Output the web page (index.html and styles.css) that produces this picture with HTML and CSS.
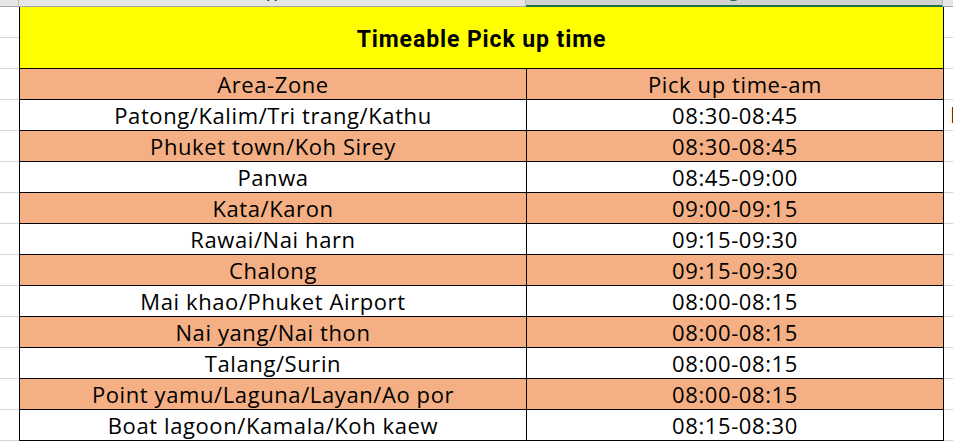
FILE: index.html
```html
<!DOCTYPE html>
<html>
<head>
<meta charset="utf-8">
<link rel="stylesheet" href="styles.css">
</head>
<body>
<div class="colhead">
  <div class="ch corner"></div>
  <div class="ch col-a"><span class="letter">A</span></div>
  <div class="ch col-b"><span class="letter">B</span></div>
  <div class="ch col-c"></div>
</div>
<div class="sheet">
  <div class="gutter"></div>
  <div class="table">
    <div class="title">Timeable Pick up time</div>
    <div class="row salmon"><div class="cell zone">Area-Zone</div><div class="cell time">Pick up time-am</div></div>
    <div class="row"><div class="cell zone">Patong/Kalim/Tri trang/Kathu</div><div class="cell time">08:30-08:45</div></div>
    <div class="row salmon"><div class="cell zone">Phuket town/Koh Sirey</div><div class="cell time">08:30-08:45</div></div>
    <div class="row"><div class="cell zone">Panwa</div><div class="cell time">08:45-09:00</div></div>
    <div class="row salmon"><div class="cell zone">Kata/Karon</div><div class="cell time">09:00-09:15</div></div>
    <div class="row"><div class="cell zone">Rawai/Nai harn</div><div class="cell time">09:15-09:30</div></div>
    <div class="row salmon"><div class="cell zone">Chalong</div><div class="cell time">09:15-09:30</div></div>
    <div class="row"><div class="cell zone">Mai khao/Phuket Airport</div><div class="cell time">08:00-08:15</div></div>
    <div class="row salmon"><div class="cell zone">Nai yang/Nai thon</div><div class="cell time">08:00-08:15</div></div>
    <div class="row"><div class="cell zone">Talang/Surin</div><div class="cell time">08:00-08:15</div></div>
    <div class="row salmon"><div class="cell zone">Point yamu/Laguna/Layan/Ao por</div><div class="cell time">08:00-08:15</div></div>
    <div class="row"><div class="cell zone">Boat lagoon/Kamala/Koh kaew</div><div class="cell time">08:15-08:30</div></div>
  </div>
  <div class="gutter right"><div class="spill">K</div></div>
</div>
</body>
</html>
```
FILE: styles.css
```css
html, body {
  margin: 0;
  padding: 0;
  background: #ffffff;
  overflow: hidden;
}
body {
  width: 953px;
  height: 444px;
  font-family: "Open Sans", "Noto Sans CJK SC", sans-serif;
  color: #000;
}
.colhead {
  display: flex;
  height: 7px;
}
.ch {
  box-sizing: border-box;
  height: 7px;
  background: #e6e6e6;
  border-bottom: 1px solid #a6a6a6;
  overflow: hidden;
  text-align: center;
}
.corner { width: 19px; border-right: 1px solid #bcbcbc; }
.col-a { width: 507px; border-right: 1px solid #bcbcbc; }
.col-b {
  width: 417px;
  background: #d2d2d2;
  border-bottom: 2px solid #217346;
  border-right: 1px solid #bcbcbc;
}
.col-c { flex: 1; }
.letter {
  display: block;
  font-family: "Liberation Sans", sans-serif;
  font-size: 14px;
  line-height: 14px;
  margin-top: -11px;
}
.col-a .letter { color: #000; }
.col-b .letter { color: #217346; }
.sheet {
  display: flex;
  height: 437px;
}
.gutter {
  width: 19px;
  background: repeating-linear-gradient(to bottom, transparent 0 30px, #d4d4d4 30px 31px);
}
.gutter.right {
  flex: 1;
  overflow: hidden;
}
.spill {
  margin-top: 92px;
  height: 30px;
  line-height: 30px;
  font-size: 22px;
  padding-left: 6px;
  white-space: nowrap;
}
.table {
  width: 925px;
  box-sizing: border-box;
  border-left: 1px solid #000;
  border-right: 1px solid #000;
  align-self: flex-start;
}
.title {
  height: 61px;
  border-bottom: 1px solid #000;
  background: #ffff00;
  font-family: Roboto, "Liberation Sans", sans-serif;
  font-weight: bold;
  font-size: 23px;
  letter-spacing: 0.9px;
  line-height: 65px;
  overflow: hidden;
  text-align: center;
}
.row {
  display: flex;
  height: 30px;
  border-bottom: 1px solid #000;
  background: #fff;
}
.row.salmon { background: #f4b084; }
.cell {
  font-size: 22px;
  letter-spacing: 0.6px;
  line-height: 30px;
  text-align: center;
  white-space: nowrap;
}
.cell.zone {
  width: 506px;
  border-right: 1px solid #000;
}
.cell.time {
  flex: 1;
}
```
